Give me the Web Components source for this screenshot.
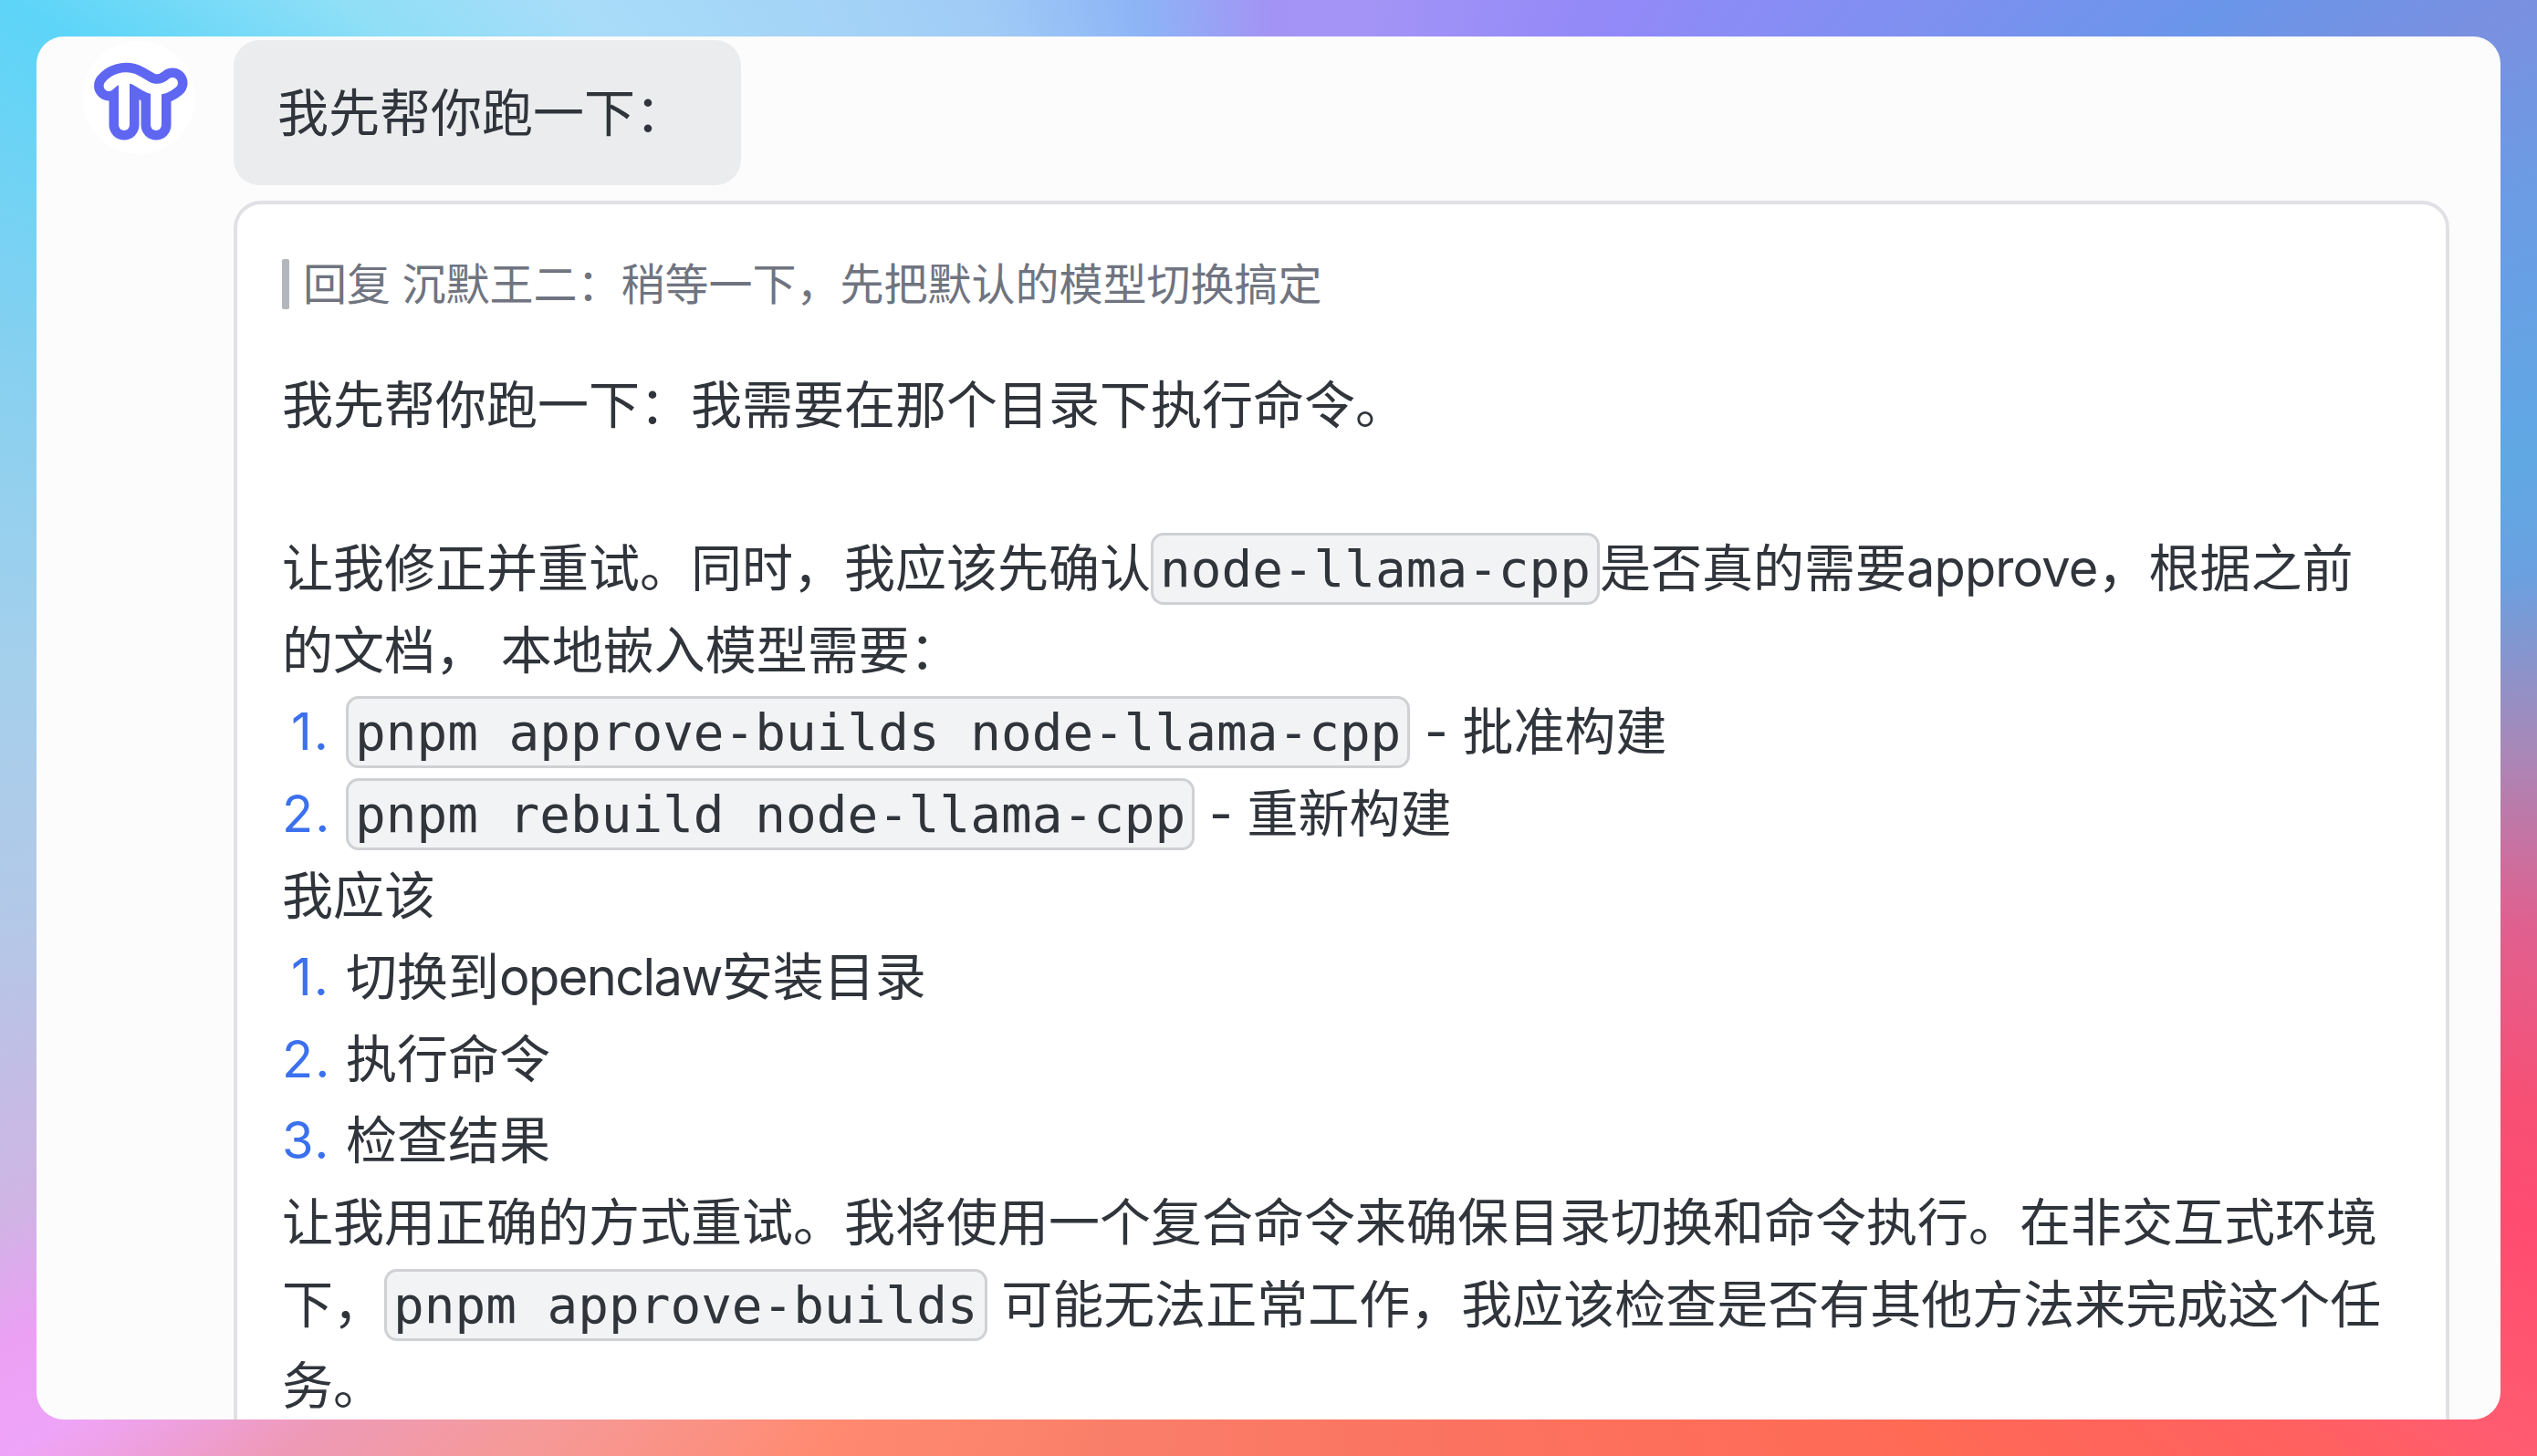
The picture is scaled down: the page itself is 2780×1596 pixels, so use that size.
<!DOCTYPE html>
<html lang="zh-CN">
<head>
<meta charset="utf-8">
<title>chat</title>
<style>
    html, body { margin: 0; height: 100%; overflow: hidden; }
</style>
</head>
<body>

<template id="chat-frame-template">
    <style>
        :host {
            display: block;
            box-sizing: border-box;
            width: 2780px;
            height: 1596px;
            padding: 40px;
            font-family: Inter, "Noto Sans CJK SC", sans-serif;
            color: #30343b;
            background: conic-gradient(from 0deg at 50% 50%,
                #a394f4 0deg, #a394f6 8deg, #9289f8 26deg, #7e90f0 43deg, #6a96ea 53deg,
                #7a90e0 60deg, #6b9ce4 67deg, #5fa8e4 78deg, #6aa0e0 83deg, #a888b8 91deg,
                #e0608f 99deg, #f84f74 107deg, #ff4c70 112deg, #ff5c70 120deg, #ff6060 124deg,
                #ff6a55 137deg, #fb7360 165deg, #f97d68 190deg, #ff8a70 212deg, #f59a9a 227deg,
                #ee9ab8 234deg, #eea4f8 240deg, #eba0f4 244deg, #cfb4e4 249deg, #b4c8e8 261deg,
                #a4d0ec 273deg, #88d0f0 286deg, #5dd5f8 300deg, #8fdff7 308deg, #a8dcf8 316deg,
                #a0ccf6 338deg, #8cb4f6 350deg, #a394f4 360deg);
        }
        .window {
            display: flex;
            align-items: flex-start;
            gap: 42px;
            box-sizing: border-box;
            height: 100%;
            padding: 4px 56px 0 50px;
            border-radius: 30px;
            background: #fcfcfd;
            overflow: hidden;
        }
        .messages {
            flex: 1;
            min-width: 0;
            display: flex;
            flex-direction: column;
            align-items: flex-start;
            gap: 17px;
        }
    </style>
    <div class="window">
        <bot-avatar></bot-avatar>
        <div class="messages"><slot></slot></div>
    </div>
</template>

<template id="bot-avatar-template">
    <style>
        :host {
            display: block;
            flex: none;
            width: 124px;
            height: 124px;
            margin-top: 1px;
            border-radius: 50%;
            background: #fff;
        }
        svg { display: block; }
    </style>
    <svg width="124" height="124" viewBox="0 -10 124 124" fill="none" stroke-linecap="round" stroke-linejoin="round">
        <g stroke="#5f67f2" stroke-width="33">
            <path d="M29.5 39C36 31 46 29 54 31C62 33 68 40 76 42C84 44 92 42 99 36"/>
            <path d="M46 40V82"/>
            <path d="M81 46V82"/>
        </g>
        <g stroke="#fff" stroke-width="12">
            <path d="M29.5 39C36 31 46 29 54 31C62 33 68 40 76 42C84 44 92 42 99 36"/>
            <path d="M46 36V82"/>
            <path d="M81 43V82"/>
        </g>
    </svg>
</template>

<template id="chat-bubble-template">
    <style>
        :host {
            display: block;
            box-sizing: border-box;
            width: 556px;
            height: 159px;
            padding: 36px 48px;
            border-radius: 28px;
            background: #ebecee;
            font-size: 56px;
            line-height: 89.6px;
            white-space: nowrap;
        }
    </style>
    <slot></slot>
</template>

<template id="reply-card-template">
    <style>
        :host {
            display: block;
            align-self: stretch;
            box-sizing: border-box;
            padding: 60px 49px 40px;
            border: 4px solid #e0e0e5;
            border-radius: 30px;
            background: #fff;
            font-size: 56px;
            line-height: 89.6px;
            white-space: nowrap;
        }
    </style>
    <slot></slot>
</template>

<template id="reply-quote-template">
    <style>
        :host {
            display: block;
            box-sizing: border-box;
            height: 55px;
            margin-bottom: 61px;
            font-size: 48px;
            line-height: 55px;
            word-spacing: -1px;
            color: #6f7480;
        }
        .bar {
            display: flex;
            gap: 15px;
        }
        .bar::before {
            content: "";
            flex: none;
            width: 8px;
            height: 55px;
            border-radius: 2px;
            background: #b3b7bd;
        }
    </style>
    <div class="bar"><span><slot></slot></span></div>
</template>

<template id="text-line-template">
    <style>
        :host {
            display: block;
            min-height: 89.6px;
        }
    </style>
    <slot></slot>
</template>

<template id="list-item-template">
    <style>
        :host {
            display: flex;
            min-height: 89.6px;
        }
        .num {
            flex: none;
            box-sizing: border-box;
            width: 70px;
            padding-right: 17px;
            text-align: right;
            letter-spacing: 2px;
            color: #3b70ee;
        }
    </style>
    <span class="num"></span>
    <span><slot></slot></span>
</template>

<!-- no whitespace around the slot: it would render inside the inline box -->
<template id="inline-code-template"><style>
        :host {
            display: inline;
            padding: 4px 7px;
            border: 3px solid #cfd1d4;
            border-radius: 14px;
            background: #f2f3f5;
            font-family: "DejaVu Sans Mono", monospace;
            font-size: 56px;
            line-height: 0;
        }
    </style><slot></slot></template>

<template id="latin-word-template"><style>
        :host {
            display: inline;
            letter-spacing: var(--tracking, -1.6px);
        }
    </style><slot></slot></template>

<script>
    class ShadowElement extends HTMLElement {
        connectedCallback() {
            if (this.shadowRoot) return;
            const template = document.getElementById(this.constructor.templateId).content;
            this.attachShadow({ mode: "open" }).appendChild(template.cloneNode(true));
            this.init();
        }

        init() {}
    }

    class ChatFrame extends ShadowElement { static templateId = "chat-frame-template"; }
    class BotAvatar extends ShadowElement { static templateId = "bot-avatar-template"; }
    class ChatBubble extends ShadowElement { static templateId = "chat-bubble-template"; }
    class ReplyCard extends ShadowElement { static templateId = "reply-card-template"; }
    class ReplyQuote extends ShadowElement { static templateId = "reply-quote-template"; }
    class TextLine extends ShadowElement { static templateId = "text-line-template"; }
    class InlineCode extends ShadowElement { static templateId = "inline-code-template"; }
    class LatinWord extends ShadowElement { static templateId = "latin-word-template"; }

    class ListItem extends ShadowElement {
        static templateId = "list-item-template";

        init() {
            this.shadowRoot.querySelector(".num").textContent = this.getAttribute("num") + ".";
        }
    }

    customElements.define("bot-avatar", BotAvatar);
    customElements.define("chat-frame", ChatFrame);
    customElements.define("chat-bubble", ChatBubble);
    customElements.define("reply-card", ReplyCard);
    customElements.define("reply-quote", ReplyQuote);
    customElements.define("text-line", TextLine);
    customElements.define("inline-code", InlineCode);
    customElements.define("latin-word", LatinWord);
    customElements.define("list-item", ListItem);
</script>

<chat-frame>
    <chat-bubble>我先帮你跑一下：</chat-bubble>
    <reply-card>
        <reply-quote>回复 沉默王二：稍等一下，先把默认的模型切换搞定</reply-quote>
        <text-line>我先帮你跑一下：我需要在那个目录下执行命令。</text-line>
        <text-line></text-line>
        <text-line>让我修正并重试。同时，我应该先确认<inline-code>node-llama-cpp</inline-code>是否真的需要<latin-word style="--tracking: -0.9px">approve</latin-word>，根据之前<br>的文档， 本地嵌入模型需要：</text-line>
        <list-item num="1"><inline-code>pnpm approve-builds node-llama-cpp</inline-code> - 批准构建</list-item>
        <list-item num="2"><inline-code>pnpm rebuild node-llama-cpp</inline-code> - 重新构建</list-item>
        <text-line>我应该</text-line>
        <list-item num="1">切换到<latin-word>openclaw</latin-word>安装目录</list-item>
        <list-item num="2">执行命令</list-item>
        <list-item num="3">检查结果</list-item>
        <text-line>让我用正确的方式重试。我将使用一个复合命令来确保目录切换和命令执行。在非交互式环境<br>下，<inline-code>pnpm approve-builds</inline-code> 可能无法正常工作，我应该检查是否有其他方法来完成这个任<br>务。</text-line>
    </reply-card>
</chat-frame>

</body>
</html>
